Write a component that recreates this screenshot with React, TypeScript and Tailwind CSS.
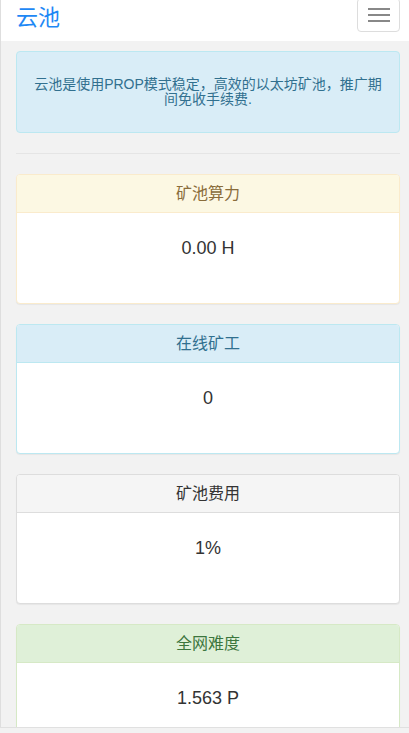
const font = {
	fontFamily:
		'"Helvetica Neue", Helvetica, "Liberation Sans", "Noto Sans CJK SC", sans-serif',
};

type Panel = {
	title: string;
	value: string;
	wrap: string;
	head: string;
};

const panels: Panel[] = [
	{
		title: "矿池算力",
		value: "0.00 H",
		wrap: "border-[#faebcc]",
		head: "bg-[#fcf8e3] border-[#faebcc] text-[#8a6d3b]",
	},
	{
		title: "在线矿工",
		value: "0",
		wrap: "border-[#bce8f1]",
		head: "bg-[#d9edf7] border-[#bce8f1] text-[#31708f]",
	},
	{
		title: "矿池费用",
		value: "1%",
		wrap: "border-[#dddddd]",
		head: "bg-[#f5f5f5] border-[#dddddd] text-[#333333]",
	},
	{
		title: "全网难度",
		value: "1.563 P",
		wrap: "border-[#d6e9c6]",
		head: "bg-[#dff0d8] border-[#d6e9c6] text-[#3c763d]",
	},
];

export default function App() {
	return (
		<div
			className="min-h-screen bg-[#f2f2f2] border-l border-[#dedede] text-[#333]"
			style={font}
		>
			{/* Navbar */}
			<div className="h-[41px] bg-white flex items-start justify-between pl-[15px] pr-[9px]">
				<a className="text-[22px] leading-[22px] mt-[7px] text-[#1e88f5]">
					云池
				</a>
				<button className="w-[43px] h-[34px] -mt-[2px] border border-[#dddddd] rounded-[4px] flex flex-col items-center justify-center gap-[4px] bg-white">
					<span className="block w-[22px] h-[2px] bg-[#888888]" />
					<span className="block w-[22px] h-[2px] bg-[#888888]" />
					<span className="block w-[22px] h-[2px] bg-[#888888]" />
				</button>
			</div>

			<div className="pl-[15px] pr-[9px] pt-[10px]">
				{/* Intro alert */}
				<div className="h-[82px] border border-[#bce8f1] bg-[#d9edf7] rounded-[4px] text-[#31708f] text-[14px] leading-[15px] text-center flex items-center justify-center px-[15px]">
					<p>云池是使用PROP模式稳定，高效的以太坊矿池，推广期间免收手续费.</p>
				</div>

				<hr className="my-[20px] border-0 border-t border-[#e5e5e5]" />

				{/* Stat panels */}
				<div className="flex flex-col gap-[20px] pb-[20px]">
					{panels.map((p) => (
						<div
							key={p.title}
							className={`bg-white border rounded-[4px] shadow-[0_1px_1px_rgba(0,0,0,0.05)] overflow-hidden ${p.wrap}`}
						>
							<div
								className={`h-[38px] border-b flex items-center justify-center text-[16px] ${p.head}`}
							>
								{p.title}
							</div>
							<div className="h-[90px] pt-[25px] text-center text-[18px] leading-[20px] text-[#333]">
								{p.value}
							</div>
						</div>
					))}
				</div>
			</div>

			{/* bottom strip */}
			<div className="fixed left-0 bottom-0 w-full h-[6px] bg-[#f2f2f2] border-t border-[#e0e0e0]" />
		</div>
	);
}
